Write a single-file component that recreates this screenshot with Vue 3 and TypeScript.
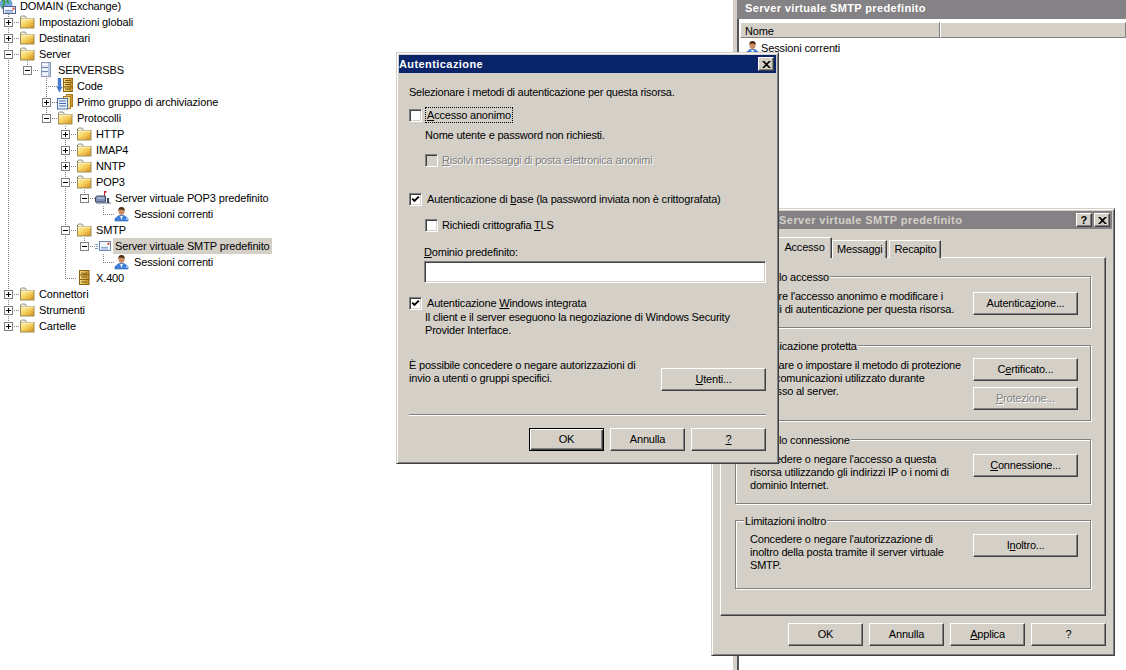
<script setup lang="ts">
interface Row { label: string; level: number; icon: string; exp?: '+' | '-'; selected?: boolean }
const rows: Row[] = [
  { label: 'DOMAIN (Exchange)', level: 0, icon: 'i-domain' },
  { label: 'Impostazioni globali', level: 1, icon: 'i-folder', exp: '+' },
  { label: 'Destinatari', level: 1, icon: 'i-folder', exp: '+' },
  { label: 'Server', level: 1, icon: 'i-folder', exp: '-' },
  { label: 'SERVERSBS', level: 2, icon: 'i-server', exp: '-' },
  { label: 'Code', level: 3, icon: 'i-queue' },
  { label: 'Primo gruppo di archiviazione', level: 3, icon: 'i-storage', exp: '+' },
  { label: 'Protocolli', level: 3, icon: 'i-folder', exp: '-' },
  { label: 'HTTP', level: 4, icon: 'i-folder', exp: '+' },
  { label: 'IMAP4', level: 4, icon: 'i-folder', exp: '+' },
  { label: 'NNTP', level: 4, icon: 'i-folder', exp: '+' },
  { label: 'POP3', level: 4, icon: 'i-folder', exp: '-' },
  { label: 'Server virtuale POP3 predefinito', level: 5, icon: 'i-mailbox', exp: '-' },
  { label: 'Sessioni correnti', level: 6, icon: 'i-user' },
  { label: 'SMTP', level: 4, icon: 'i-folder', exp: '-' },
  { label: 'Server virtuale SMTP predefinito', level: 5, icon: 'i-smtp', exp: '-', selected: true },
  { label: 'Sessioni correnti', level: 6, icon: 'i-user' },
  { label: 'X.400', level: 4, icon: 'i-x400' },
  { label: 'Connettori', level: 1, icon: 'i-folder', exp: '+' },
  { label: 'Strumenti', level: 1, icon: 'i-folder', exp: '+' },
  { label: 'Cartelle', level: 1, icon: 'i-folder', exp: '+' }
]
const indent = (r: Row) => ({ marginLeft: `${r.level === 0 ? 0 : (r.level - 1) * 19 + 4}px` })
const cy = (n: number) => 6.5 + 16 * n + 0.5
const vlines: [number, number, number][] = [
  [8, 12, 322], [27, 60, 66], [46, 78, 118], [65, 126, 278], [84, 190, 198], [84, 238, 246], [103, 206, 214], [103, 254, 262]
]
const hlines: [number, number, number][] = rows
  .map((r, i): [number, number, number] => {
    const x = r.level === 0 ? 0 : (r.level - 1) * 19 + 8
    return [x, x + 11, cy(i) - 1]
  })
  .filter((_, i) => i > 0)
</script>

<template>
  <div class="desktop">
    <svg class="defs" width="0" height="0">
      <defs>
        <linearGradient id="fold" x1="0" y1="0" x2="1" y2="1">
          <stop offset="0" stop-color="#fff4b8" />
          <stop offset=".5" stop-color="#f6cf5c" />
          <stop offset="1" stop-color="#d08c10" />
        </linearGradient>
        <linearGradient id="stack" x1="0" y1="0" x2="1" y2="0">
          <stop offset="0" stop-color="#fbe58e" />
          <stop offset="1" stop-color="#c48a1a" />
        </linearGradient>
        <symbol id="i-folder" viewBox="0 0 16 16">
          <path d="M1.5 5V3L2.5 2H6L7.5 4" fill="#f7f5ea" stroke="#8f8c7c" />
          <rect x="1.5" y="4.5" width="13.5" height="9.5" fill="url(#fold)" stroke="#a08c58" />
          <path d="M2 5H14.5" stroke="#fff8d8" />
        </symbol>
        <symbol id="i-server" viewBox="0 0 16 16">
          <rect x="3.5" y=".5" width="9" height="14" fill="#e3e9f6" stroke="#8f9cba" />
          <path d="M4 5.5H12M4 9.5H12" stroke="#7286ad" />
          <path d="M5 2.5H11M5 7.5H11M5 12H11" stroke="#fff" />
          <rect x="10" y="1" width="2" height="13" fill="#b9c5dd" />
        </symbol>
        <symbol id="i-queue" viewBox="0 0 16 16">
          <path d="M1.2 0H3.8V9H5L2.5 14L0 9H1.2Z" fill="#3c78d8" stroke="#2a55a8" stroke-width=".5" />
          <rect x="6.5" y=".5" width="9.5" height="4" fill="url(#stack)" stroke="#8a6414" />
          <rect x="6.5" y="4.5" width="9.5" height="4.5" fill="url(#stack)" stroke="#8a6414" />
          <rect x="6.5" y="9" width="9.5" height="4.5" fill="url(#stack)" stroke="#8a6414" />
          <path d="M8 2.5H14M8 6.5H14M8 11H14" stroke="#7a5610" />
        </symbol>
        <symbol id="i-storage" viewBox="0 0 16 16">
          <rect x="9.5" y=".5" width="6" height="12" fill="url(#stack)" stroke="#a87c1c" />
          <rect x="6.5" y="2.5" width="7" height="12" fill="#f4e09a" stroke="#a87c1c" />
          <rect x=".5" y="4.5" width="10" height="10.5" fill="#eef3fb" stroke="#4a6ea8" />
          <path d="M2 7H9M2 9.5H9M2 12H9" stroke="#3f66b0" />
        </symbol>
        <symbol id="i-mailbox" viewBox="0 0 16 16">
          <path d="M9 1H11.5V2.8H10V8H9Z" fill="#d8202a" />
          <path d="M1 13H16" stroke="#5b6a8a" />
          <path d="M13 8V13" stroke="#39455e" stroke-width="2" />
          <path d="M.5 8Q.5 6 2.5 6H10.5V12H.5Z" fill="#7f90b2" stroke="#3e4c6a" />
          <path d="M2 8H9" stroke="#c5d0e6" />
        </symbol>
        <symbol id="i-smtp" viewBox="0 0 16 16">
          <path d="M0 6.5H3M1 8.5H3M0 10.5H3" stroke="#7d95c4" />
          <rect x="4.5" y="3.5" width="11" height="9" fill="#f2f6fd" stroke="#6f86b4" />
          <path d="M6 9.5H13M6 11H13" stroke="#8aa2d0" />
          <rect x="12.5" y="4.8" width="2" height="2" fill="#d8402a" />
        </symbol>
        <symbol id="i-user" viewBox="0 0 16 16">
          <path d="M1 15V12.5L5 9.5H10L14 12.5V15Z" fill="#3f80dc" stroke="#2a5cae" stroke-width=".6" />
          <path d="M6 10H9L7.5 14Z" fill="#e8f0fb" />
          <ellipse cx="7.5" cy="5.5" rx="3" ry="3.4" fill="#c98e63" />
          <path d="M4.4 5Q4 1 7.5 1Q11 1 10.6 5Q9 3.4 7 3.6Q5.2 3.6 4.4 5Z" fill="#4a2a14" />
          <path d="M12 13H14" stroke="#fff" />
        </symbol>
        <symbol id="i-x400" viewBox="0 0 16 16">
          <rect x="3.5" y=".5" width="9.5" height="4.5" fill="url(#stack)" stroke="#8a6414" />
          <rect x="3.5" y="5" width="9.5" height="4.5" fill="url(#stack)" stroke="#8a6414" />
          <rect x="3.5" y="9.5" width="9.5" height="5" fill="url(#stack)" stroke="#8a6414" />
          <path d="M5 2.5L8 4L11 2.5M5 7H11M5 12H11" stroke="#7a5610" fill="none" />
        </symbol>
        <symbol id="i-domain" viewBox="0 0 16 16">
          <circle cx="6" cy="6" r="6" fill="#6fa8de" stroke="#4d80b8" stroke-width=".6" />
          <path d="M2 2Q5 3 4 6T2 9M8 1Q6 4 9 5" stroke="#3f9a48" stroke-width="2" fill="none" />
          <rect x="3.5" y="8.5" width="12" height="7" fill="#f3f6fc" stroke="#4f6390" />
          <path d="M5 12.5H13M5 14H13" stroke="#7f98cc" />
          <rect x="12.5" y="9.6" width="2" height="2" fill="#d8402a" />
        </symbol>
        <symbol id="i-check" viewBox="0 0 9 9">
          <path d="M1.2 3.6L3.5 5.9L7.8 1.6" stroke="#000" stroke-width="2" fill="none" />
        </symbol>
      </defs>
    </svg>

    <section class="tree">
      <svg class="guides" width="300" height="340">
        <path v-for="(l, i) in vlines" :key="'v' + i" :d="`M${l[0] + 0.5} ${l[1]}V${l[2]}`" class="dot" />
        <path v-for="(l, i) in hlines" :key="'h' + i" :d="`M${l[0]} ${l[2] + 0.5}H${l[1]}`" class="dot" />
      </svg>
      <div v-for="(r, i) in rows" :key="i" class="row" :style="indent(r)">
        <span v-if="r.level > 0" class="exp-slot">
          <span v-if="r.exp" class="exp">
            <i class="h"></i><i v-if="r.exp === '+'" class="v"></i>
          </span>
        </span>
        <svg class="ico" width="16" height="16"><use :href="'#' + r.icon" /></svg>
        <span class="lbl" :class="{ sel: r.selected }">{{ r.label }}</span>
      </div>
    </section>

    <section class="pane">
      <div class="pane-title">Server virtuale SMTP predefinito</div>
      <div class="list-head">
        <div class="col first">Nome</div>
        <div class="col rest"></div>
      </div>
      <div class="list-row">
        <svg class="ico" width="16" height="16"><use href="#i-user" /></svg>
        <span>Sessioni correnti</span>
      </div>
    </section>

    <section class="win props">
      <header class="cap inactive">
        <span class="cap-text">Proprietà - Server virtuale SMTP predefinito</span>
        <span class="cap-btn q">?</span>
        <span class="cap-btn x"><svg width="9" height="7" viewBox="0 0 9 7"><path d="M0 0H2.2L4.5 2.2L6.8 0H9L5.6 3.5L9 7H6.8L4.5 4.8L2.2 7H0L3.4 3.5Z" fill="#000" /></svg></span>
      </header>
      <nav class="tabs">
        <span class="tab first">Generale</span>
        <span class="tab active">Accesso</span>
        <span class="tab">Messaggi</span>
        <span class="tab">Recapito</span>
      </nav>
      <div class="tabpanel">
        <div class="grp g1">
          <span class="legend">Controllo accesso</span>
          <p>Abilitare l'accesso anonimo e modificare i<br />metodi di autenticazione per questa risorsa.</p>
          <div class="grp-btns"><button class="btn wide">Autentica<u>z</u>ione...</button></div>
        </div>
        <div class="grp g2">
          <span class="legend">Comunicazione protetta</span>
          <p>Verificare o impostare il metodo di protezione<br />delle comunicazioni utilizzato durante<br />l'accesso al server.</p>
          <div class="grp-btns">
            <button class="btn wide">C<u>e</u>rtificato...</button>
            <button class="btn wide off"><u>P</u>rotezione...</button>
          </div>
        </div>
        <div class="grp g3">
          <span class="legend">Controllo connessione</span>
          <p>Concedere o negare l'accesso a questa<br />risorsa utilizzando gli indirizzi IP o i nomi di<br />dominio Internet.</p>
          <div class="grp-btns"><button class="btn wide"><u>C</u>onnessione...</button></div>
        </div>
        <div class="grp g4">
          <span class="legend">Limitazioni inoltro</span>
          <p>Concedere o negare l'autorizzazione di<br />inoltro della posta tramite il server virtuale<br />SMTP.</p>
          <div class="grp-btns"><button class="btn wide">I<u>n</u>oltro...</button></div>
        </div>
      </div>
      <footer class="props-foot">
        <button class="btn">OK</button>
        <button class="btn">Annulla</button>
        <button class="btn"><u>A</u>pplica</button>
        <button class="btn">?</button>
      </footer>
    </section>

    <section class="win auth">
      <header class="cap">
        <span class="cap-text">Autenticazione</span>
        <span class="cap-btn x"><svg width="9" height="7" viewBox="0 0 9 7"><path d="M0 0H2.2L4.5 2.2L6.8 0H9L5.6 3.5L9 7H6.8L4.5 4.8L2.2 7H0L3.4 3.5Z" fill="#000" /></svg></span>
      </header>
      <div class="auth-body">
        <div class="ln a1">Selezionare i metodi di autenticazione per questa risorsa.</div>
        <label class="chk a2"><span class="box"></span><span class="focus"><u>A</u>ccesso anonimo</span></label>
        <div class="ln a3">Nome utente e password non richiesti.</div>
        <label class="chk a4 disabled"><span class="box"></span><span class="txt"><u>R</u>isolvi messaggi di posta elettronica anonimi</span></label>
        <label class="chk a5"><span class="box"><svg width="9" height="9"><use href="#i-check" /></svg></span><span class="txt">Autenticazione di <u>b</u>ase (la password inviata non è crittografata)</span></label>
        <label class="chk a6"><span class="box"></span><span class="txt">Richiedi crittografia <u>T</u>LS</span></label>
        <div class="ln a7"><u>D</u>ominio predefinito:</div>
        <div class="input"></div>
        <label class="chk a8"><span class="box"><svg width="9" height="9"><use href="#i-check" /></svg></span><span class="txt">Autenticazione <u>W</u>indows integrata</span></label>
        <div class="ln a9">Il client e il server eseguono la negoziazione di Windows Security<br />Provider Interface.</div>
        <div class="perm">
          <div class="ln">È possibile concedere o negare autorizzazioni di<br />invio a utenti o gruppi specifici.</div>
          <button class="btn wide users"><u>U</u>tenti...</button>
        </div>
        <div class="sep"></div>
        <div class="auth-foot">
          <button class="btn default">OK</button>
          <button class="btn">Annulla</button>
          <button class="btn"><u>?</u></button>
        </div>
      </div>
    </section>
  </div>
</template>

<style>
html, body { margin: 0; background: #fff; overflow: hidden; }
</style>

<style scoped>
.desktop {
  position: relative;
  width: 1126px;
  height: 670px;
  overflow: hidden;
  background: #fff;
  font: 11px/13px "Liberation Sans", Arial, sans-serif;
  letter-spacing: -.2px;
  color: #000;
}
.defs { position: absolute; }
u { text-decoration: underline; text-underline-offset: 1px; }

/* tree */
.tree { position: absolute; left: 0; top: -2px; width: 300px; letter-spacing: -.13px; }
.guides { position: absolute; left: 0; top: 2px; }
.dot { stroke: #808080; stroke-width: 1; stroke-dasharray: 1 1; fill: none; }
.row { position: relative; display: flex; align-items: center; height: 16px; white-space: nowrap; }
.exp-slot { width: 15px; flex: none; display: flex; }
.exp {
  position: relative; width: 9px; height: 9px; box-sizing: border-box;
  border: 1px solid #808080; background: #fff;
}
.exp .h { position: absolute; left: 1px; top: 3px; width: 5px; height: 1px; background: #000; }
.exp .v { position: absolute; left: 3px; top: 1px; width: 1px; height: 5px; background: #000; }
.ico { flex: none; display: block; }
.lbl { margin-left: 2px; padding: 1px 2px; line-height: 14px; }
.lbl.sel { background: #d4d0c8; }

/* right pane */
.pane {
  position: absolute; left: 733px; top: 0; right: 0; bottom: 0;
  border-left: 4px solid #d4d0c8; background: #fff;
  box-shadow: inset 2px 0 0 #555;
  padding-left: 2px;
  letter-spacing: -.13px;
}
.pane-title {
  height: 19px; margin-left: -2px; padding-left: 8px; background: #848284; color: #fff;
  font-weight: 700; line-height: 17px; letter-spacing: .35px;
}
.list-head { display: flex; height: 16px; margin-top: 3px; padding-left: 1px; }
.col {
  box-sizing: border-box; background: #d4d0c8; height: 16px; line-height: 16px; padding-left: 4px;
  border: 1px solid; border-color: #fff #808080 #808080 #fff;
}
.col.first { width: 200px; }
.col.rest { flex: 1; }
.list-row { display: flex; align-items: center; height: 16px; margin-top: 2px; padding-left: 6px; }

/* windows */
.win {
  position: absolute; box-sizing: border-box; background: #d4d0c8;
  border: 1px solid; border-color: #d4d0c8 #404040 #404040 #d4d0c8;
  box-shadow: inset 1px 1px 0 #fff, inset -1px -1px 0 #808080;
  padding: 2px;
}
.auth { left: 396px; top: 52px; width: 383px; height: 412px; z-index: 2; }
.props { left: 711px; top: 208px; width: 404px; height: 448px; }
.cap {
  display: flex; align-items: center; height: 18px; padding: 0 2px 0 0;
  background: #0a246a; color: #fff; font-weight: 700; gap: 2px; letter-spacing: .42px;
}
.cap.inactive { background: #848284; color: #d4d0c8; }
.cap.inactive .cap-text { padding-left: 2px; }
.cap-text { flex: 1; white-space: nowrap; }
.cap-btn {
  box-sizing: border-box; width: 16px; height: 14px; background: #d4d0c8; color: #000;
  display: flex; align-items: center; justify-content: center;
  border: 1px solid; border-color: #fff #404040 #404040 #fff;
  box-shadow: inset -1px -1px 0 #808080; font-size: 11px; line-height: 12px;
}

/* buttons */
.btn {
  box-sizing: border-box; width: 75px; height: 23px; padding: 0; margin: 0;
  font: inherit; letter-spacing: inherit; color: #000; background: #d4d0c8;
  border: 1px solid; border-color: #fff #404040 #404040 #fff;
  box-shadow: inset -1px -1px 0 #808080;
}
.btn.wide { width: 105px; }
.btn.off { color: #808080; text-shadow: 1px 1px 0 #fff; }
.btn.default { border: 1px solid #000; box-shadow: inset 1px 1px 0 #fff, inset -1px -1px 0 #404040, inset -2px -2px 0 #808080; }

/* auth dialog */
.auth-body { display: flex; flex-direction: column; padding: 0 10px; }
.ln { white-space: nowrap; }
.a1 { letter-spacing: -.24px; }
.chk { display: flex; align-items: center; height: 14px; white-space: nowrap; }
.box {
  box-sizing: border-box; flex: none; width: 13px; height: 13px; background: #fff;
  display: flex; align-items: center; justify-content: center;
  border: 1px solid; border-color: #808080 #fff #fff #808080;
  box-shadow: inset 1px 1px 0 #404040, inset -1px -1px 0 #d4d0c8;
}
.txt { margin-left: 5px; }
.focus { margin-left: 4px; padding: 0 1px; outline: 1px dotted #000; outline-offset: 0; line-height: 14px; }
.disabled .box { background: #d4d0c8; }
.disabled .txt { margin-left: 4px; color: #808080; text-shadow: 1px 1px 0 #fff; }
.a1 { margin-top: 13px; }
.a2 { margin-top: 9px; }
.a3 { margin-top: 7px; padding-left: 16px; }
.a4 { margin-top: 11px; margin-left: 16px; }
.a5 { margin-top: 25px; }
.a6 { margin-top: 12px; margin-left: 16px; }
.a6 .txt { margin-left: 4px; }
.a7 { margin-top: 14px; padding-left: 15px; }
.input {
  box-sizing: border-box; height: 22px; margin: 2px 0 0 15px; background: #fff;
  border: 1px solid; border-color: #808080 #fff #fff #808080;
  box-shadow: inset 1px 1px 0 #404040, inset -1px -1px 0 #d4d0c8;
}
.a8 { margin-top: 13px; }
.a9 { margin-top: 1px; padding-left: 16px; }
.perm { display: flex; justify-content: space-between; margin-top: 22px; height: 32px; }
.users { margin-top: 9px; }
.sep { height: 1px; margin-top: 23px; background: #808080; border-bottom: 1px solid #fff; }
.auth-foot { display: flex; justify-content: flex-end; gap: 6px; margin-top: 12px; }

/* properties dialog */
.tabs { display: flex; align-items: flex-end; height: 29px; padding-left: 6px; position: relative; margin-bottom: -1px; box-sizing: border-box; }
.tab {
  box-sizing: border-box; height: 18px; padding: 2px 4px 0; margin-right: 2px;
  background: #d4d0c8; line-height: 13px;
  border: 1px solid; border-color: #fff #404040 transparent #fff;
  border-bottom: 0;
  box-shadow: inset -1px 0 0 #808080;
}
.tab.first { width: 57px; }
.tab.active { width: 55px; height: 21px; padding: 3px 0 0; margin: 0 0 0 -2px; text-align: center; }
.tabpanel {
  box-sizing: border-box; height: 359px; margin: 0 6px; padding: 18px 14px 0 14px;
  border: 1px solid; border-color: #fff #404040 #404040 #fff;
  box-shadow: inset -1px -1px 0 #808080;
}
.grp {
  position: relative; box-sizing: border-box; display: flex; justify-content: space-between;
  padding-left: 14px; padding-right: 12px;
  border: 1px solid #808080;
  box-shadow: 1px 1px 0 #fff, inset 1px 1px 0 #fff;
}
.grp p { margin: 0; white-space: nowrap; }
.legend { position: absolute; left: 8px; top: -6px; padding: 0 1px; background: #d4d0c8; white-space: nowrap; }
.grp-btns { display: flex; flex-direction: column; gap: 6px; }
.g1 { height: 52px; padding-top: 13px; }
.g1 .grp-btns { margin-top: 2px; }
.g2 { height: 76px; margin-top: 17px; padding-top: 13px; }
.g2 .grp-btns { margin-top: -1px; }
.g3 { height: 65px; margin-top: 18px; padding-top: 13px; }
.g3 .grp-btns { margin-top: 1px; }
.g4 { height: 69px; margin-top: 16px; padding-top: 12px; }
.g4 .grp-btns { margin-top: 1px; }
.props-foot { display: flex; justify-content: flex-end; gap: 6px; margin-top: 7px; padding-right: 6px; }
</style>
